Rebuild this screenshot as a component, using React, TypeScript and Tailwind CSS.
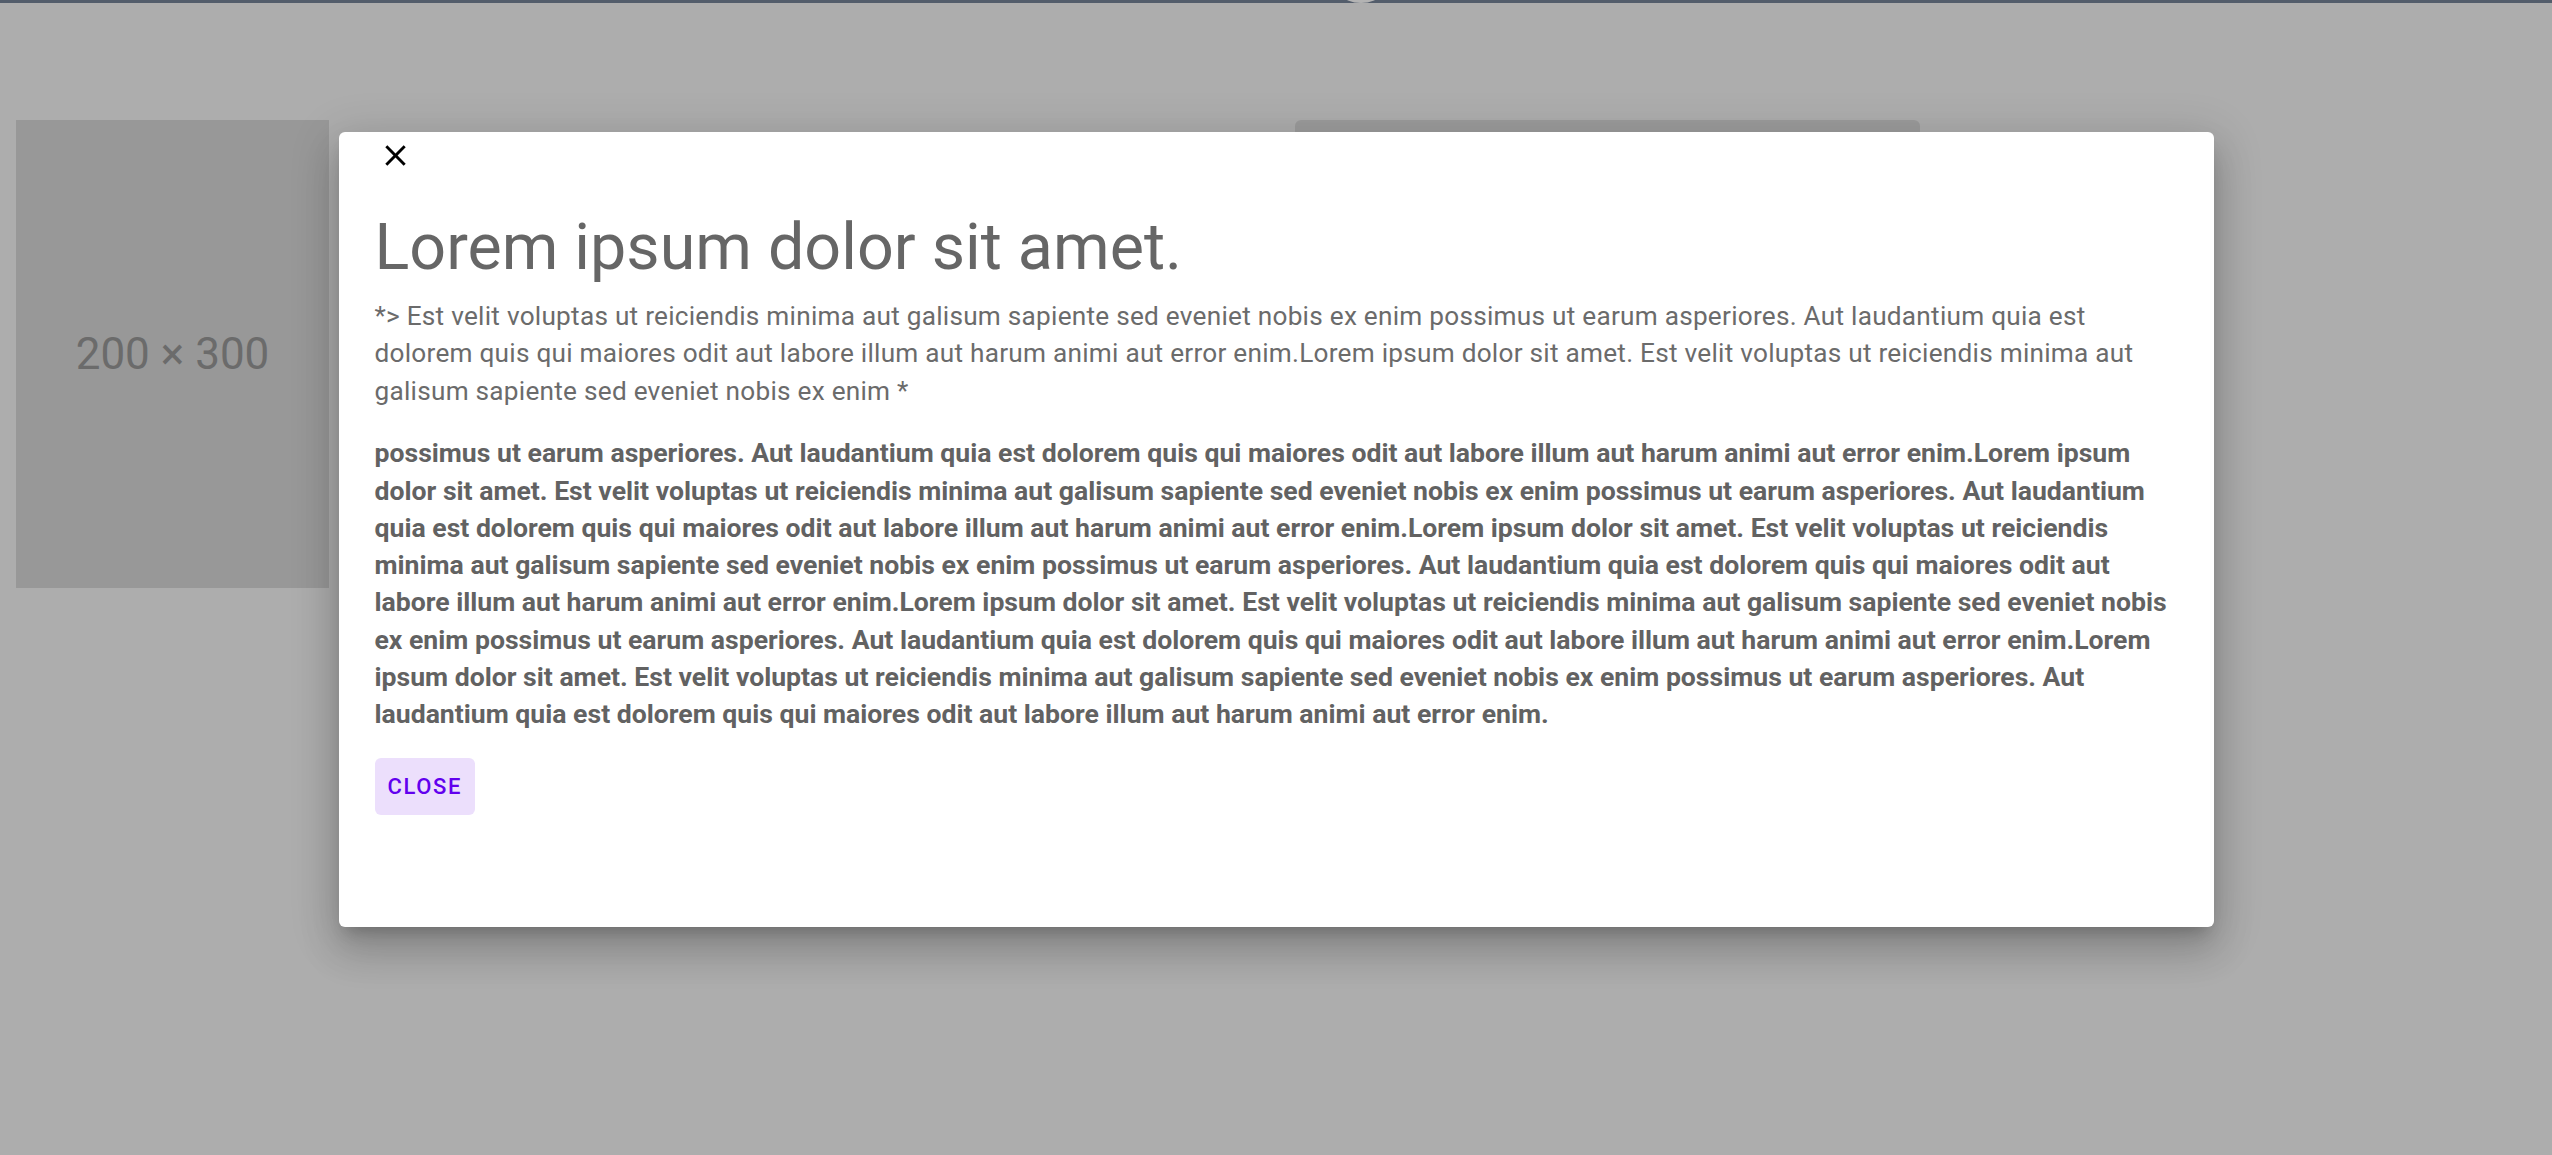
const intro =
  '*> Est velit voluptas ut reiciendis minima aut galisum sapiente sed eveniet nobis ex enim possimus ut earum asperiores. Aut laudantium quia est dolorem quis qui maiores odit aut labore illum aut harum animi aut error enim.Lorem ipsum dolor sit amet. Est velit voluptas ut reiciendis minima aut galisum sapiente sed eveniet nobis ex enim *';

const chunk =
  'Lorem ipsum dolor sit amet. Est velit voluptas ut reiciendis minima aut galisum sapiente sed eveniet nobis ex enim possimus ut earum asperiores. Aut laudantium quia est dolorem quis qui maiores odit aut labore illum aut harum animi aut error enim.';

const body =
  'possimus ut earum asperiores. Aut laudantium quia est dolorem quis qui maiores odit aut labore illum aut harum animi aut error enim.' +
  chunk.repeat(4);

function CloseIcon() {
  return (
    <svg viewBox="0 0 24 24" className="w-[35px] h-[35px]" fill="currentColor">
      <path d="M19 6.41 17.59 5 12 10.59 6.41 5 5 6.41 10.59 12 5 17.59 6.41 19 12 13.41 17.59 19 19 17.59 13.41 12z" />
    </svg>
  );
}

export default function App() {
  return (
    <div className="relative w-full h-[1155px] overflow-hidden bg-[#adadad] font-['Roboto',sans-serif]">
      {/* page underneath the backdrop */}
      <div className="h-[3px] bg-[#535d6b]" />
      <div className="absolute left-[1327px] top-[-65px] w-[68px] h-[68px] rounded-full bg-[#b3b3b3]" />
      <div className="flex items-start pt-[117px] pl-4">
        <div className="w-[313px] h-[468px] bg-[#989898] flex items-center justify-center">
          <span className="text-[44px] text-[#6b6b6b] leading-none">200 × 300</span>
        </div>
        <div className="ml-[966px] w-[625px] h-[420px] rounded-md bg-[#9c9c9c]" />
      </div>

      {/* dialog */}
      <div className="absolute inset-0 flex justify-center pt-[132px]">
        <div className="w-[1875px] h-[795px] bg-white rounded-md px-9 pt-[6px] shadow-[0px_11px_15px_-7px_rgba(0,0,0,0.2),0px_24px_38px_3px_rgba(0,0,0,0.14),0px_9px_46px_8px_rgba(0,0,0,0.12)]">
          <button className="ml-[3px] block text-black">
            <CloseIcon />
          </button>
          <h2 className="mt-[36px] text-[64.6px] leading-[1.2] font-normal text-[#666666]">
            Lorem ipsum dolor sit amet.
          </h2>
          <p className="mt-[11px] text-[26.2px] leading-[37.6px] tracking-[0.25px] text-[#6b6b6b]">{intro}</p>
          <p className="mt-[24px] text-[26.6px] leading-[37.3px] font-bold text-[#626262]">{body}</p>
          <button className="mt-[25px] h-[57px] px-[13px] rounded-md bg-[#ecdffc] text-[#6200ee] text-[22px] font-medium tracking-[1.6px]">
            CLOSE
          </button>
        </div>
      </div>
    </div>
  );
}
